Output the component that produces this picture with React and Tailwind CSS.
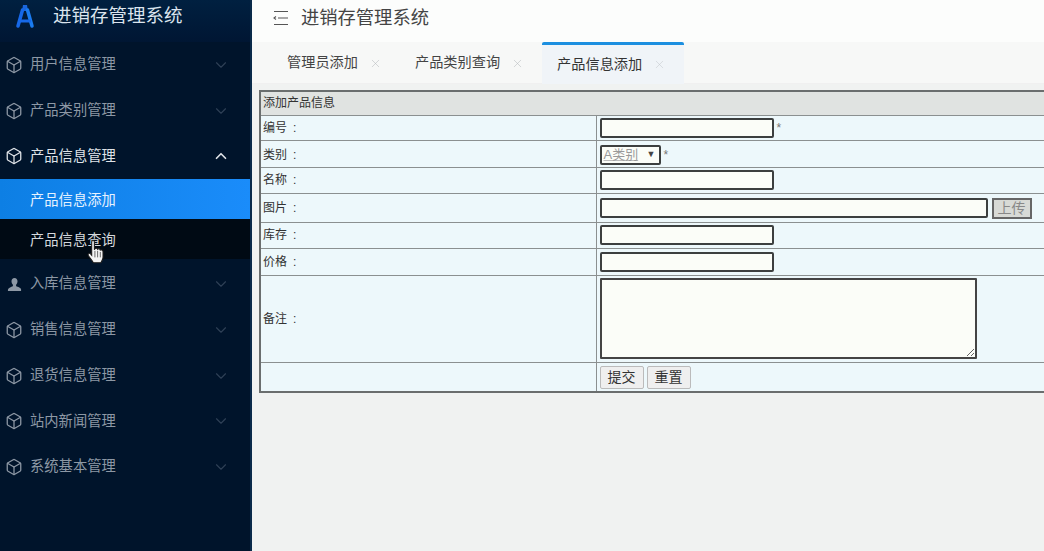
import { Box, ChevronDown, ChevronUp, X } from "lucide-react";

const font = { fontFamily: '"Liberation Sans", "Noto Sans CJK SC", sans-serif' };

function UserIcon() {
  return (
    <svg width="15" height="15" viewBox="0 0 16 16" className="shrink-0 ml-[2px]" fill="currentColor">
      <path d="M8 1c2 0 3.200 1.500 3.200 3.600 0 1.500-.6 2.900-1.500 3.600v1.300c0 .6 4.800 1.200 5.300 3.500V15H1v-1.500c.5-2.300 5.300-3.400 5.300-4V8.200C5.400 7.500 4.800 6.100 4.800 4.600 4.800 2.500 6 1 8 1z" />
    </svg>
  );
}

function Logo() {
  return (
    <svg width="24" height="26" viewBox="0 0 24 26" fill="none">
      <path d="M10 2h4l1 6h-6z" fill="#1a66dc" />
      <path d="M9.500 7 5 23" stroke="#1668e8" strokeWidth="3.500" strokeLinecap="round" />
      <path d="M14.500 7 19 23" stroke="#1a7cf0" strokeWidth="3.500" strokeLinecap="round" />
      <path d="M6 18H18" stroke="#1668e8" strokeWidth="3" />
    </svg>
  );
}

function MenuItem({ label, open, user }) {
  return (
    <div className={"h-[45.75px] flex items-center pl-[5px] pr-[20px] text-[14.3px] " + (open ? "text-[#dfe3e8]" : "text-[#8d98a5]")}>
      <span className="w-[25px] flex">
        {user ? <UserIcon /> : <Box size={18} strokeWidth={1.7} />}
      </span>
      <span className="flex-1 truncate">{label}</span>
      {open
        ? <ChevronUp size={18} strokeWidth={2.2} className="text-[#dfe3e8]" />
        : <ChevronDown size={18} strokeWidth={1.5} className="text-[#2e4056]" />}
    </div>
  );
}

function Sidebar() {
  return (
    <aside className="w-[252px] shrink-0 bg-[#00142b] border-r-2 border-[#0a2a4a] flex flex-col">
      <div className="h-[42px] flex items-center pl-[13px] pb-[10px] gap-[16px] bg-gradient-to-b from-[#002040] to-[#001633]">
        <Logo />
        <span className="text-[18.5px] text-[#dbe4ee]">进销存管理系统</span>
      </div>
      <MenuItem label="用户信息管理" />
      <MenuItem label="产品类别管理" />
      <MenuItem label="产品信息管理" open />
      <div className="h-[40px] flex items-center pl-[30px] pt-[2px] text-[14.3px] text-[#e6f2ff] bg-gradient-to-r from-[#0d7fe4] to-[#1a8cfa]">产品信息添加</div>
      <div className="relative h-[40px] flex items-center pl-[30px] pt-[2px] text-[14.3px] text-[#d5d8dc] bg-[#000a14]">
        产品信息查询
        <svg width="22" height="27" viewBox="0 0 20 25" className="absolute left-[85px] top-[20px]">
          <path d="M6 2.500c0-1.500 2.500-1.500 2.500 0V10l.5-1c1-1 2.300-.5 2.500.5 1-.8 2.300-.3 2.500.8 1-.6 2.500 0 2.500 1.500v5c0 2-1 3.500-2 5.200H7.500c-1-2-2.500-3.500-4.500-6.500-1-1.700.8-3 2-1.800l1 1.300z" fill="#f5f5f5" stroke="#1c1c1c" strokeWidth="1" />
          <path d="M9 11v6M11.500 11v6M14 12v5" stroke="#555" strokeWidth=".8" />
        </svg>
      </div>
      <div className="h-[2px]" />
      <MenuItem label="入库信息管理" user />
      <MenuItem label="销售信息管理" />
      <MenuItem label="退货信息管理" />
      <MenuItem label="站内新闻管理" />
      <MenuItem label="系统基本管理" />
    </aside>
  );
}

function Tab({ label, active }) {
  return (
    <div className={"h-[42px] flex items-center pl-[15px] pr-[18px] gap-[11px] text-[14.2px] " + (active ? "bg-[#f0f4f8] border-t-[3px] border-[#1c8fe0] rounded-t-[2px] text-[#333]" : "text-[#444]")}>
      <span>{label}</span>
      <X size={13} strokeWidth={1} className={active ? "text-[#c4c8cc]" : "text-[#b4b8bc]"} />
    </div>
  );
}

function Field({ w }) {
  return <input className={"h-[20px] border-2 border-[#3c3f3f] rounded-[2px] bg-[#fbfdf8] block " + w} />;
}

function Row({ label, h, pad = "", children }) {
  return (
    <tr className={h}>
      <td className={"border border-[#8b9090] pl-[2px] text-[12px] text-[#333] " + pad}>{label}</td>
      <td className={"border border-[#8b9090] pl-[3px] text-[12px] text-[#555] " + pad}>{children}</td>
    </tr>
  );
}

function FormTable() {
  return (
    <table className="w-full table-fixed border-collapse border-2 border-[#6a6e6e] bg-[#edf8fb]">
      <colgroup>
        <col className="w-[336px]" />
        <col />
      </colgroup>
      <tbody>
        <tr className="h-[24px] bg-[#e0e3e1]">
          <td colSpan={2} className="pl-[2px] text-[12px] text-[#333] border border-[#8b9090]">添加产品信息</td>
        </tr>
        <Row label={"编号\u2002:"} h="h-[25px]">
          <div className="flex items-center gap-[3px]"><Field w="w-[174px]" /><span className="text-[#777]">*</span></div>
        </Row>
        <Row label={"类别\u2002:"} h="h-[27px]" pad="pt-[3px]">
          <div className="flex items-center gap-[3px]">
            <div className="w-[61px] h-[20px] border-2 border-[#3c3f3f] rounded-[2px] bg-[#fbfdf8] flex items-center justify-between pl-[2px] pr-[3px] text-[13px] text-[#999]">
              <span className="underline decoration-[#bbb]">A类别</span>
              <span className="text-[9px] text-[#444]">▼</span>
            </div>
            <span className="text-[#777]">*</span>
          </div>
        </Row>
        <Row label={"名称\u2002:"} h="h-[26px]"><Field w="w-[174px]" /></Row>
        <Row label={"图片\u2002:"} h="h-[29px]" pad="pt-[1px]">
          <div className="flex items-center gap-[4px]">
            <Field w="w-[388px]" />
            <button className="w-[40px] h-[21px] border-2 border-[#666] bg-[#d8dad6] text-[14px] text-[#888] flex items-center justify-center">上传</button>
          </div>
        </Row>
        <Row label={"库存\u2002:"} h="h-[26px]"><Field w="w-[174px]" /></Row>
        <Row label={"价格\u2002:"} h="h-[27px]"><Field w="w-[174px]" /></Row>
        <Row label={"备注\u2002:"} h="h-[87px]">
          <textarea className="block w-[377px] h-[81px] border-2 border-[#444] bg-[#fbfdf8] rounded-[1px]" />
        </Row>
        <Row label="" h="h-[30px]" pad="pt-[2px]">
          <div className="flex gap-[3px]">
            <button className="w-[44px] h-[23px] border border-[#bbb] rounded-[2px] bg-[#efefef] text-[14px] text-[#333]">提交</button>
            <button className="w-[44px] h-[23px] border border-[#bbb] rounded-[2px] bg-[#efefef] text-[14px] text-[#333]">重置</button>
          </div>
        </Row>
      </tbody>
    </table>
  );
}

export default function App() {
  return (
    <div className="h-[551px] w-[1044px] flex overflow-hidden bg-white" style={font}>
      <Sidebar />
      <main className="flex-1 min-w-0 flex flex-col bg-[#f0f2f1]">
        <div className="h-[42px] flex items-center pl-[21px] pb-[6px] gap-[12px] bg-[#fcfdfc]">
          <svg width="16" height="14" viewBox="0 0 16 14" fill="none" stroke="#555" strokeWidth="1.100">
            <path d="M1 .5H15M5 7H15M1 13.500H15M3 5.500 1 7l2 1.500" />
          </svg>
          <span className="text-[18.3px] text-[#444]">进销存管理系统</span>
        </div>
        <div className="h-[42px] flex pl-[20px] bg-[#f7f8f7] border-b border-[#f0f0f0]">
          <Tab label="管理员添加" />
          <Tab label="产品类别查询" />
          <Tab label="产品信息添加" active />
        </div>
        <div className="pl-[7px] pt-[6px] -mr-[4px]">
          <FormTable />
        </div>
      </main>
    </div>
  );
}
